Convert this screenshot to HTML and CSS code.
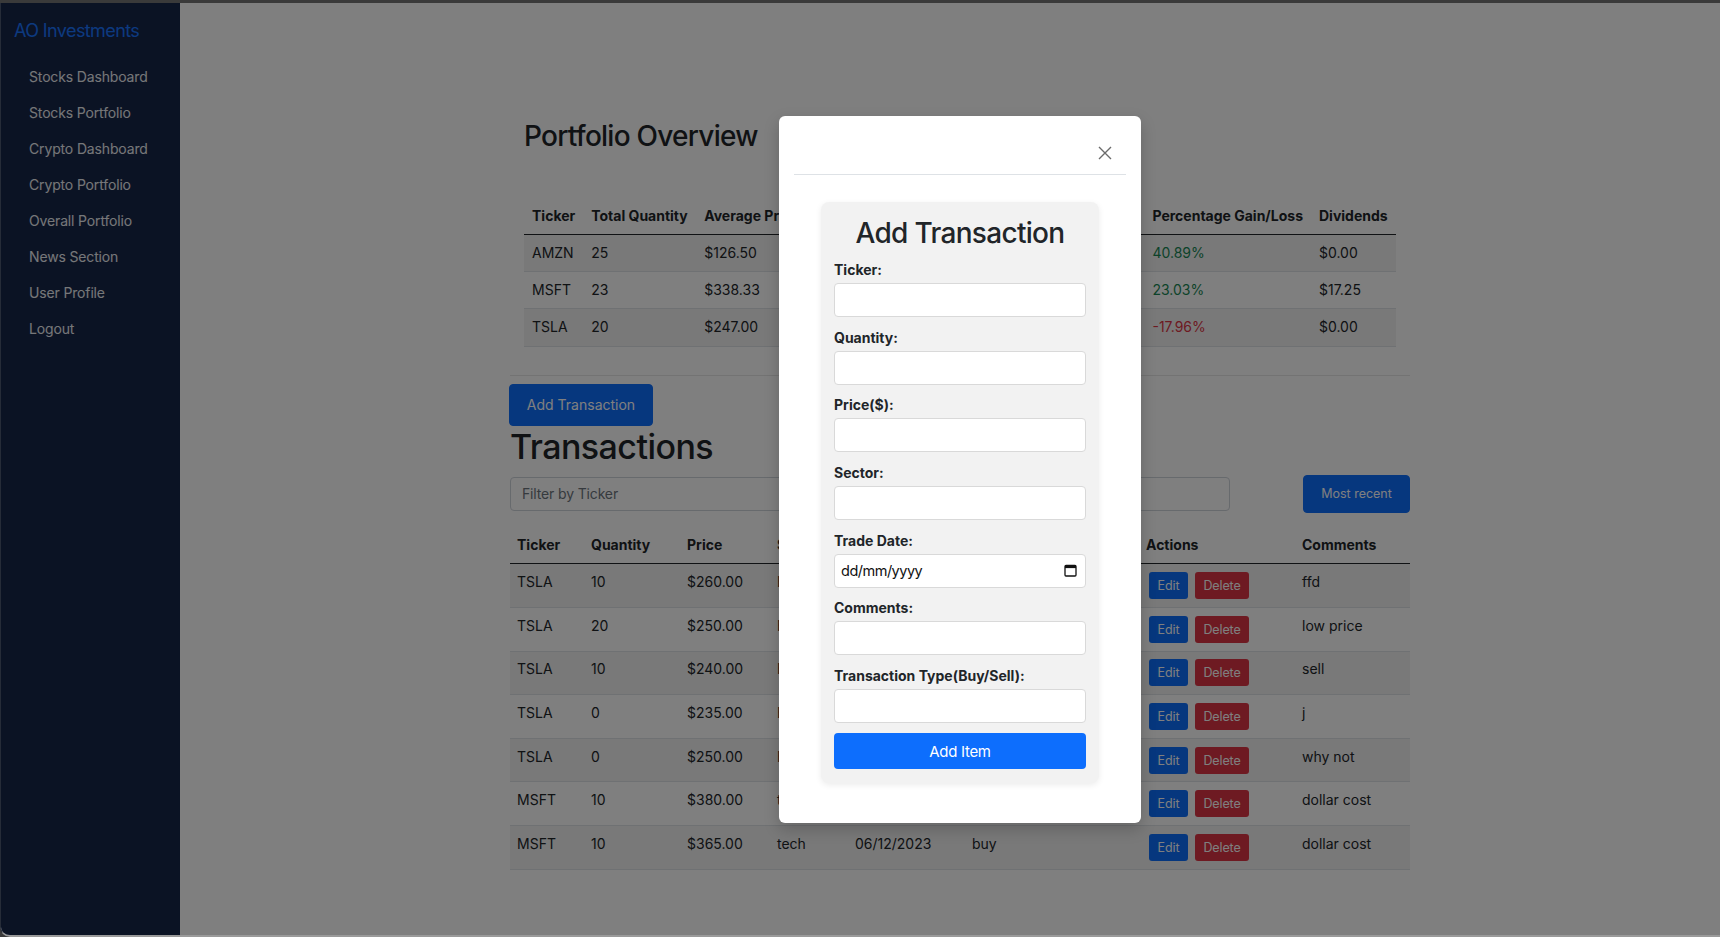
FILE: index.html
```html
<!DOCTYPE html>
<html lang="en">
<head>
<meta charset="utf-8">
<title>AO Investments</title>
<link rel="stylesheet" href="styles.css">
</head>
<body>
<div class="window">
  <aside class="sidebar">
    <a class="brand" href="#">AO Investments</a>
    <nav class="side-nav">
      <a class="side-link" href="#">Stocks Dashboard</a>
      <a class="side-link" href="#">Stocks Portfolio</a>
      <a class="side-link" href="#">Crypto Dashboard</a>
      <a class="side-link" href="#">Crypto Portfolio</a>
      <a class="side-link" href="#">Overall Portfolio</a>
      <a class="side-link" href="#">News Section</a>
      <a class="side-link" href="#">User Profile</a>
      <a class="side-link" href="#">Logout</a>
    </nav>
  </aside>

  <main class="main">
    <div class="container">
      <section class="overview">
        <h3 class="overview-title">Portfolio Overview</h3>
        <table class="table striped portfolio">
          <thead>
            <tr>
              <th class="p-ticker">Ticker</th>
              <th class="p-qty">Total Quantity</th>
              <th class="p-avg">Average Price</th>
              <th class="p-cur"></th>
              <th class="p-val"></th>
              <th class="p-gain"></th>
              <th class="p-pct">Percentage Gain/Loss</th>
              <th class="p-div">Dividends</th>
            </tr>
          </thead>
          <tbody>
            <tr><td>AMZN</td><td>25</td><td>$126.50</td><td></td><td></td><td></td><td class="up">40.89%</td><td>$0.00</td></tr>
            <tr><td>MSFT</td><td>23</td><td>$338.33</td><td></td><td></td><td></td><td class="up">23.03%</td><td>$17.25</td></tr>
            <tr><td>TSLA</td><td>20</td><td>$247.00</td><td></td><td></td><td></td><td class="down">-17.96%</td><td>$0.00</td></tr>
          </tbody>
        </table>
      </section>

      <hr class="divider">

      <button class="btn btn-primary btn-add" type="button">Add Transaction</button>
      <h2 class="tx-title">Transactions</h2>
      <div class="filter-row">
        <input class="form-control filter-input" type="text" placeholder="Filter by Ticker">
        <button class="btn btn-primary btn-recent" type="button">Most recent</button>
      </div>

      <table class="table striped tx">
        <thead>
          <tr>
            <th class="t-ticker">Ticker</th>
            <th class="t-qty">Quantity</th>
            <th class="t-price">Price</th>
            <th class="t-sector">Sector</th>
            <th class="t-date"></th>
            <th class="t-type"></th>
            <th class="t-actions">Actions</th>
            <th class="t-comments">Comments</th>
          </tr>
        </thead>
        <tbody>
          <tr><td>TSLA</td><td>10</td><td>$260.00</td><td>EV</td><td></td><td></td><td><span class="actions"><button class="btn-sm btn-primary" type="button">Edit</button><button class="btn-sm btn-danger" type="button">Delete</button></span></td><td>ffd</td></tr>
          <tr><td>TSLA</td><td>20</td><td>$250.00</td><td>EV</td><td></td><td></td><td><span class="actions"><button class="btn-sm btn-primary" type="button">Edit</button><button class="btn-sm btn-danger" type="button">Delete</button></span></td><td>low price</td></tr>
          <tr><td>TSLA</td><td>10</td><td>$240.00</td><td>EV</td><td></td><td></td><td><span class="actions"><button class="btn-sm btn-primary" type="button">Edit</button><button class="btn-sm btn-danger" type="button">Delete</button></span></td><td>sell</td></tr>
          <tr><td>TSLA</td><td>0</td><td>$235.00</td><td>EV</td><td></td><td></td><td><span class="actions"><button class="btn-sm btn-primary" type="button">Edit</button><button class="btn-sm btn-danger" type="button">Delete</button></span></td><td>j</td></tr>
          <tr><td>TSLA</td><td>0</td><td>$250.00</td><td>EV</td><td></td><td></td><td><span class="actions"><button class="btn-sm btn-primary" type="button">Edit</button><button class="btn-sm btn-danger" type="button">Delete</button></span></td><td>why not</td></tr>
          <tr><td>MSFT</td><td>10</td><td>$380.00</td><td>tech</td><td></td><td></td><td><span class="actions"><button class="btn-sm btn-primary" type="button">Edit</button><button class="btn-sm btn-danger" type="button">Delete</button></span></td><td>dollar cost</td></tr>
          <tr><td>MSFT</td><td>10</td><td>$365.00</td><td>tech</td><td>06/12/2023</td><td>buy</td><td><span class="actions"><button class="btn-sm btn-primary" type="button">Edit</button><button class="btn-sm btn-danger" type="button">Delete</button></span></td><td>dollar cost</td></tr>
        </tbody>
      </table>
    </div>
  </main>

  <div class="backdrop"></div>

  <div class="modal" role="dialog">
    <div class="modal-header">
      <button class="close-btn" type="button" aria-label="Close">
        <svg width="14" height="14" viewBox="0 0 14 14"><path d="M1 1L13 13M13 1L1 13" stroke="#6b6b6b" stroke-width="1.4" fill="none"/></svg>
      </button>
    </div>
    <div class="modal-body">
      <form class="tx-form">
        <h2 class="form-title">Add Transaction</h2>
        <label class="field-label">Ticker:</label>
        <input class="field" type="text">
        <label class="field-label">Quantity:</label>
        <input class="field" type="text">
        <label class="field-label">Price($):</label>
        <input class="field" type="text">
        <label class="field-label">Sector:</label>
        <input class="field" type="text">
        <label class="field-label">Trade Date:</label>
        <div class="field date-field">
          <span class="date-text">dd/mm/yyyy</span>
          <svg class="cal-icon" width="13" height="13" viewBox="0 0 13 13"><rect x="1" y="1.5" width="11" height="10.5" rx="1" fill="none" stroke="#111" stroke-width="1.3"/><rect x="1" y="1.5" width="11" height="2.6" fill="#111"/></svg>
        </div>
        <label class="field-label">Comments:</label>
        <input class="field" type="text">
        <label class="field-label">Transaction Type(Buy/Sell):</label>
        <input class="field" type="text">
        <button class="add-item" type="button">Add Item</button>
      </form>
    </div>
  </div>
</div>
</body>
</html>
```

FILE: styles.css
```css
* { box-sizing: border-box; }

html, body {
  margin: 0;
  height: 100%;
  background: #3a3a3a;
  font-family: Inter, "Noto Sans", sans-serif;
  color: #212529;
}

.window {
  position: relative;
  display: flex;
  margin-top: 3px;
  height: 934px;
  border-left: 1px solid #262c38;
  border-bottom: 2px solid #9a9a9a;
  border-bottom-left-radius: 10px;
  overflow: hidden;
  background: #ffffff;
}

/* Sidebar */
.sidebar {
  width: 179px;
  flex: none;
  background: #172649;
  padding: 14px 14px 0 13px;
}

.brand {
  display: block;
  font-size: 18px;
  letter-spacing: -0.6px;
  line-height: 28px;
  color: #1a74ff;
  text-decoration: none;
  white-space: nowrap;
}

.side-nav {
  display: flex;
  flex-direction: column;
  margin-top: 14px;
}

.side-link {
  display: block;
  padding: 8px 14px 8px 15px;
  line-height: 20px;
  font-size: 14px;
  letter-spacing: -0.15px;
  color: #eceef2;
  text-decoration: none;
  white-space: nowrap;
}

/* Main */
.main {
  flex: 1;
  display: flex;
  justify-content: center;
  padding: 117px 0 0 20px;
}

.container {
  width: 900px;
}

.overview {
  padding: 0 14px;
}

.overview-title {
  margin: 0 0 44px;
  font-size: 28px;
  font-weight: 500;
  letter-spacing: -0.75px;
  line-height: 1.2;
}

.table {
  width: 100%;
  border-collapse: collapse;
  font-size: 14px;
  line-height: 20.3px;
  margin: 0 0 16px;
}

.table th,
.table td {
  padding: 8px 8px;
  text-align: left;
  vertical-align: top;
  white-space: nowrap;
}

.table th {
  font-weight: 700;
  border-bottom: 1px solid #212529;
}

.table td {
  border-bottom: 1px solid #dee2e6;
}

.table.striped tbody tr:nth-child(odd) td {
  background: rgba(0, 0, 0, 0.05);
}

.portfolio { margin-bottom: 0; }

.portfolio .p-ticker { width: 56px; }
.portfolio .p-qty { width: 113px; }
.portfolio .p-avg { width: 113px; }
.portfolio .p-cur { width: 113px; }
.portfolio .p-val { width: 113px; }
.portfolio .p-gain { width: 113px; }
.portfolio .p-pct { width: 166px; }
.portfolio .p-div { width: 85px; }

.up { color: #198754; }
.down { color: #dc3545; }

.divider {
  margin: 28px 0 8px;
  border: 0;
  border-top: 1px solid #e6e6e6;
}

.btn {
  font-family: inherit;
  border: 1px solid transparent;
  border-radius: 4px;
  cursor: pointer;
}

.btn-primary {
  background: #0d6efd;
  border-color: #0d6efd;
  color: #fff;
}

.btn-danger {
  background: #dc3545;
  border-color: #dc3545;
  color: #fff;
}

.btn-add {
  display: block;
  width: 144px;
  height: 42px;
  margin-left: -1px;
  font-size: 14px;
}

.tx-title {
  margin: 1px 0 7px;
  font-size: 34px;
  font-weight: 500;
  letter-spacing: -0.55px;
  line-height: 1.2;
}

.filter-row {
  display: flex;
  align-items: center;
  justify-content: space-between;
  margin-bottom: 15px;
}

.form-control {
  font-family: inherit;
  border: 1px solid #ced4da;
  border-radius: 4px;
  background: #fff;
}

.filter-input {
  width: 720px;
  height: 34px;
  padding: 6px 11px;
  font-size: 14px;
  letter-spacing: -0.15px;
  color: #212529;
}

.filter-input::placeholder { color: #6c757d; }

.btn-recent {
  width: 107px;
  height: 38px;
  font-size: 12.5px;
}

.tx th,
.tx td { padding: 7.8px 7px; }

.tx .t-ticker { width: 74px; }
.tx .t-qty { width: 96px; }
.tx .t-price { width: 90px; }
.tx .t-sector { width: 78px; }
.tx .t-date { width: 117px; }
.tx .t-type { width: 174px; }
.tx .t-actions { width: 156px; }
.tx .t-comments { width: 115px; }

.actions {
  display: flex;
  gap: 7px;
  padding-left: 3px;
}

.btn-sm {
  height: 27px;
  padding: 0 7.5px;
  font-family: inherit;
  font-size: 12.5px;
  letter-spacing: -0.1px;
  border: 1px solid transparent;
  border-radius: 3px;
}

/* Backdrop + modal */
.backdrop {
  position: absolute;
  inset: 0;
  background: rgba(0, 0, 0, 0.5);
}

.modal {
  position: absolute;
  left: 778px;
  top: 113px;
  width: 362px;
  height: 707px;
  padding: 15px;
  background: #fff;
  border-radius: 6px;
  box-shadow: 0 6px 16px rgba(0, 0, 0, 0.2);
}

.modal-header {
  height: 44px;
  display: flex;
  justify-content: flex-end;
  align-items: center;
  border-bottom: 1px solid #dee2e6;
}

.close-btn {
  width: 32px;
  height: 32px;
  margin-right: 5px;
  padding: 0;
  border: 0;
  background: transparent;
  display: flex;
  align-items: center;
  justify-content: center;
}

.modal-body {
  padding-top: 27px;
  display: flex;
  justify-content: center;
}

.tx-form {
  width: 278px;
  padding: 15px 13px 14px;
  background: #f2f2f2;
  border-radius: 8px;
  box-shadow: 0 2px 6px rgba(0, 0, 0, 0.08);
  display: flex;
  flex-direction: column;
}

.form-title {
  margin: 0 0 9.4px;
  text-align: center;
  font-size: 28px;
  font-weight: 500;
  letter-spacing: -0.7px;
  line-height: 33.6px;
  color: #212529;
}

.field-label {
  font-size: 14px;
  font-weight: 700;
  line-height: 20px;
  margin-bottom: 3px;
  color: #212529;
}

.field {
  height: 34px;
  margin-bottom: 10.7px;
  border: 1px solid #d9d9d9;
  border-radius: 4px;
  background: #fff;
  font-family: inherit;
  font-size: 15px;
}

.date-field {
  display: flex;
  align-items: center;
  justify-content: space-between;
  padding: 0 8px 0 6px;
}

.date-text {
  color: #111;
  font-size: 14.5px;
  letter-spacing: -0.5px;
}

.add-item {
  height: 36px;
  margin-top: -0.7px;
  border: 0;
  border-radius: 4px;
  background: #0d6efd;
  color: #fff;
  font-family: inherit;
  font-size: 15px;
  letter-spacing: -0.3px;
}
```
